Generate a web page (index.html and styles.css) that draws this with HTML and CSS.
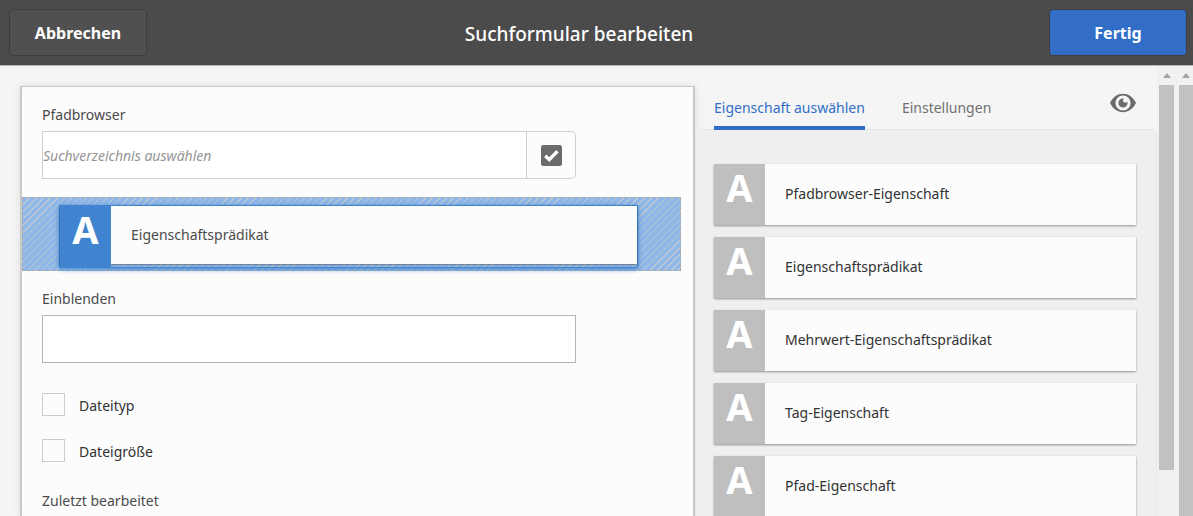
FILE: index.html
```html
<!DOCTYPE html>
<html lang="de">
<head>
<meta charset="utf-8">
<meta name="viewport" content="width=device-width, initial-scale=1">
<title>Suchformular bearbeiten</title>
<link rel="stylesheet" href="styles.css">
</head>
<body>
<header class="topbar">
  <button type="button" class="btn">Abbrechen</button>
  <h1 class="title">Suchformular bearbeiten</h1>
  <button type="button" class="btn btn-primary">Fertig</button>
</header>
<main class="workspace">
  <form class="form-panel">
    <div class="field">
      <label class="label" for="path">Pfadbrowser</label>
      <div class="path-group">
        <input class="path-input" id="path" type="text" placeholder="Suchverzeichnis auswählen">
        <button type="button" class="path-button" aria-label="Durchsuchen">
          <svg width="21" height="21" viewBox="0 0 21 21" aria-hidden="true"><rect width="21" height="21" rx="2.500" fill="#6b6b6b"/><path d="M4.300 10.800 8.200 14.600 16.500 6.200" fill="none" stroke="#fff" stroke-width="3.400"/></svg>
        </button>
      </div>
    </div>
    <div class="dropzone">
      <div class="selected">
        <div class="card card-selected"><span class="tile tile-active">A</span><span class="card-text">Eigenschaftsprädikat</span></div>
      </div>
    </div>
    <div class="field">
      <label class="label" for="show">Einblenden</label>
      <input class="text-input" id="show" type="text">
    </div>
    <div class="checks">
      <label class="check"><input type="checkbox" class="box"><span class="check-text">Dateityp</span></label>
      <label class="check"><input type="checkbox" class="box"><span class="check-text">Dateigröße</span></label>
    </div>
    <div class="field section-label">Zuletzt bearbeitet</div>
  </form>
  <aside class="sidebar">
    <nav class="tabs">
      <a href="#select" class="tab tab-active">Eigenschaft auswählen</a>
      <a href="#settings" class="tab">Einstellungen</a>
      <button type="button" class="preview" aria-label="Vorschau">
        <svg width="26" height="20" viewBox="0 0 26 20" aria-hidden="true"><path fill="#6b6b6b" fill-rule="evenodd" d="M0 10C3 4 7.500 .8 13 .8S23 4 26 10c-3 6-7.500 9.200-13 9.200S3 16 0 10ZM13 2.600a7.600 7.400 0 1 0 0 14.800 7.600 7.400 0 0 0 0-14.800Z"/><path fill="#6b6b6b" d="M13 5.400a4.600 4.600 0 1 0 4.600 4.600c0-.6-.1-1.100-.3-1.600-.5.900-1.300 1.400-2.200 1.200-1.400-.2-2.200-1.200-2.100-2.400.1-.8.500-1.300 1.100-1.700-.4-.1-.7-.1-1.100-.1Z"/></svg>
      </button>
    </nav>
    <div class="cards" id="select">
      <div class="card"><span class="tile">A</span><span class="card-text">Pfadbrowser-Eigenschaft</span></div>
      <div class="card"><span class="tile">A</span><span class="card-text">Eigenschaftsprädikat</span></div>
      <div class="card"><span class="tile">A</span><span class="card-text">Mehrwert-Eigenschaftsprädikat</span></div>
      <div class="card"><span class="tile">A</span><span class="card-text">Tag-Eigenschaft</span></div>
      <div class="card"><span class="tile">A</span><span class="card-text">Pfad-Eigenschaft</span></div>
    </div>
  </aside>
  <div class="scrollbar" aria-hidden="true"><span class="arrow"></span><span class="thumb"></span></div>
  <div class="scrollbar scrollbar-page" aria-hidden="true"><span class="arrow"></span><span class="thumb thumb-full"></span></div>
</main>
</body>
</html>
```
FILE: styles.css
```css
* { box-sizing: border-box; }

body {
  margin: 0;
  height: 100vh;
  overflow: hidden;
  display: flex;
  flex-direction: column;
  background: #f5f5f5;
  color: #4b4b4b;
  font: 14px/20px "Noto Sans", "Open Sans", sans-serif;
}

button, input { font: inherit; color: inherit; }

.topbar {
  flex: none;
  display: flex;
  align-items: center;
  justify-content: space-between;
  padding: 9px 6px 9px 9px;
  background: #4b4b4b;
  border-bottom: 1px solid #b8b8b8;
}

.btn {
  width: 138px;
  height: 47px;
  padding: 1px 0 0;
  border: 1px solid #3e3e3e;
  border-radius: 4px;
  background: #505050;
  color: #fff;
  font-size: 16px;
  font-weight: 700;
}

.btn-primary { background: #326ec8; }

.title {
  margin: 0;
  padding: 2px 38px 0 0;
  color: #fff;
  font-size: 19px;
  font-weight: 500;
}

.workspace {
  flex: 1;
  min-height: 0;
  display: flex;
}

.form-panel {
  flex: 671;
  min-width: 0;
  margin: 20px 0 0 20px;
  padding-top: 18px;
  border: 2px solid #c8c8c8;
  border-top-width: 1px;
  border-bottom: 0;
  background: #fcfcfc;
  box-shadow: 0 0 8px rgba(0, 0, 0, 0.1);
}

.field { padding: 0 117px 0 20px; }

.label {
  display: block;
  margin-bottom: 6px;
}

.path-group { display: flex; }

.path-input {
  flex: 1;
  min-width: 0;
  height: 48px;
  padding: 0;
  border: 1px solid #d0d0d0;
  background: #fff;
}

.path-input::placeholder {
  color: #969696;
  font-style: italic;
  opacity: 1;
}

.path-button {
  display: grid;
  place-items: center;
  width: 49px;
  padding: 0;
  border: 1px solid #d0d0d0;
  border-left: 0;
  border-radius: 0 5px 5px 0;
  background: #fcfcfc;
}

.dropzone {
  margin: 18px 12px 18px 0;
  padding: 8px 43px 3px 37px;
  border: 1px dashed #aaa;
  background: repeating-linear-gradient(135deg, #8fb8e8 0 4px, #bcc8d4 4px 5px);
}

.selected {
  padding-bottom: 3px;
  box-shadow: 0 0 0 1px #4084d0, 0 1px 5px 1px #4084d0;
}

.card {
  display: flex;
  height: 61px;
  background: #fcfcfc;
  box-shadow: 0 1px 2px rgba(0, 0, 0, 0.4);
}

.card-selected { height: 58px; }

.tile {
  width: 51px;
  flex: none;
  background: #bfbfbf;
  color: #fff;
  font-size: 38px;
  font-weight: 700;
  line-height: 46px;
  text-align: center;
}

.tile-active {
  height: 61px;
  background: #4084d0;
}

.card-text {
  align-self: center;
  padding: 0 0 2px 20px;
}

.card-selected .card-text { padding-bottom: 0; }

.text-input {
  display: block;
  width: 100%;
  height: 48px;
  padding: 0 10px;
  border: 1px solid #b4b4b4;
  background: #fff;
}

.checks {
  display: flex;
  flex-direction: column;
  gap: 23px;
  padding: 30px 20px 0;
}

.check {
  display: flex;
  gap: 14px;
}

.box {
  appearance: none;
  width: 23px;
  height: 23px;
  margin: 0;
  border: 1px solid #ccc;
  background: #fcfcfc;
}

.check-text { padding-top: 3px; }

.check-text, .cards { color: #323232; }

.section-label { margin-top: 29px; }

.sidebar {
  flex: 462;
  min-width: 0;
  display: flex;
  flex-direction: column;
}

.tabs {
  flex: none;
  position: relative;
  z-index: 1;
  display: flex;
  align-items: flex-end;
  gap: 37px;
  height: 64px;
  padding: 0 21px 0 19px;
}

.tab {
  padding-bottom: 8px;
  border-bottom: 4px solid transparent;
  color: #707070;
  text-decoration: none;
}

.tab-active {
  border-color: #326ec8;
  color: #326ec8;
}

.preview {
  margin: 0 0 17px auto;
  padding: 0;
  border: 0;
  background: none;
  line-height: 0;
}

.cards {
  flex: 1;
  min-height: 0;
  margin-top: -1px;
  display: flex;
  flex-direction: column;
  gap: 12px;
  padding: 34px 20px 0 18px;
  border: 1px solid #e8e8e8;
  border-bottom: 0;
  border-radius: 5px 5px 0 0;
  background: #efefef;
  overflow: hidden;
}

.cards .card { flex: none; }

.scrollbar {
  width: 19px;
  flex: none;
  display: flex;
  flex-direction: column;
  align-items: center;
  padding-top: 7px;
  background: #f1f1f1;
}

.scrollbar-page {
  width: 17px;
  padding-left: 3px;
}

.arrow {
  border: 4px solid transparent;
  border-top: 0;
  border-bottom: 5px solid #a3a3a3;
}

.thumb {
  width: 15px;
  height: 87%;
  margin-top: 7px;
  background: #c1c1c1;
}

.thumb-full {
  width: 100%;
  height: 100%;
}
```
